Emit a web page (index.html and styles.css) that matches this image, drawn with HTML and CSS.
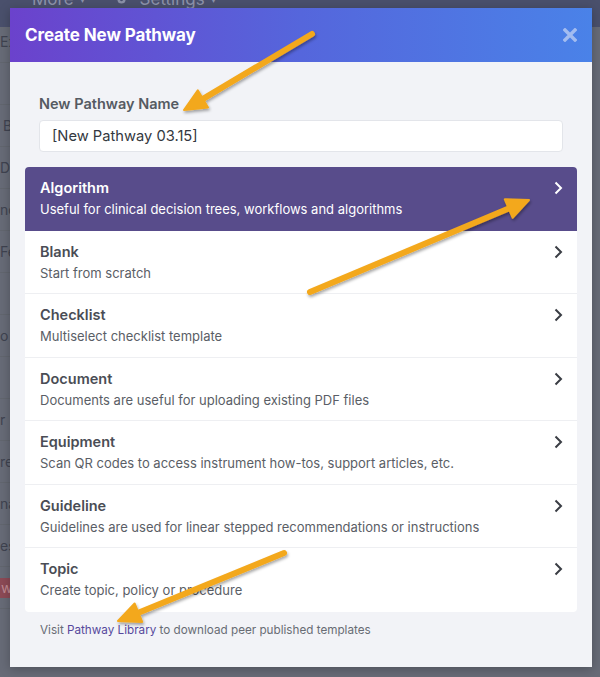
FILE: index.html
```html
<!DOCTYPE html>
<html lang="en">
<head>
<meta charset="utf-8">
<title>Create New Pathway</title>
<link rel="stylesheet" href="styles.css">
</head>
<body>
<div class="page">
  <div class="topnav">
    <span class="nav-item">More <span class="caret">&#9662;</span></span>
    <span class="nav-item"><svg class="gear" viewBox="0 0 16 16" width="13" height="13"><circle cx="8" cy="8" r="5" fill="#8a90a6"/><circle cx="8" cy="8" r="2" fill="#474e6c"/></svg> Settings <span class="caret">&#9662;</span></span>
  </div>
  <ul class="side">
    <li>Ex</li>
    <li></li>
    <li class="ind">B</li>
    <li>Dc</li>
    <li>nc</li>
    <li>Fe</li>
    <li></li>
    <li>o</li>
    <li></li>
    <li>r</li>
    <li>re</li>
    <li>na</li>
    <li>es</li>
    <li><span class="badge">w</span></li>
  </ul>
</div>

<div class="modal">
  <div class="modal-header">
    <h1 class="modal-title">Create New Pathway</h1>
    <span class="close"><svg viewBox="0 0 14 14" width="14" height="14"><path d="M2 2 L12 12 M12 2 L2 12" stroke="currentColor" stroke-width="3.4" stroke-linecap="square"/></svg></span>
  </div>
  <div class="modal-body">
    <div class="field">
      <label class="field-label">New Pathway Name</label>
      <div class="field-input">[New Pathway 03.15]</div>
    </div>
    <ul class="types">
      <li class="type active">
        <div class="type-text"><div class="type-title">Algorithm</div><div class="type-desc">Useful for clinical decision trees, workflows and algorithms</div></div>
        <svg class="chev" viewBox="0 0 9 14" width="9" height="14"><path d="M1.5 1.5 L7 7 L1.5 12.5" fill="none" stroke="currentColor" stroke-width="2"/></svg>
      </li>
      <li class="type">
        <div class="type-text"><div class="type-title">Blank</div><div class="type-desc">Start from scratch</div></div>
        <svg class="chev" viewBox="0 0 9 14" width="9" height="14"><path d="M1.5 1.5 L7 7 L1.5 12.5" fill="none" stroke="currentColor" stroke-width="2"/></svg>
      </li>
      <li class="type">
        <div class="type-text"><div class="type-title">Checklist</div><div class="type-desc">Multiselect checklist template</div></div>
        <svg class="chev" viewBox="0 0 9 14" width="9" height="14"><path d="M1.5 1.5 L7 7 L1.5 12.5" fill="none" stroke="currentColor" stroke-width="2"/></svg>
      </li>
      <li class="type">
        <div class="type-text"><div class="type-title">Document</div><div class="type-desc">Documents are useful for uploading existing PDF files</div></div>
        <svg class="chev" viewBox="0 0 9 14" width="9" height="14"><path d="M1.5 1.5 L7 7 L1.5 12.5" fill="none" stroke="currentColor" stroke-width="2"/></svg>
      </li>
      <li class="type">
        <div class="type-text"><div class="type-title">Equipment</div><div class="type-desc">Scan QR codes to access instrument how-tos, support articles, etc.</div></div>
        <svg class="chev" viewBox="0 0 9 14" width="9" height="14"><path d="M1.5 1.5 L7 7 L1.5 12.5" fill="none" stroke="currentColor" stroke-width="2"/></svg>
      </li>
      <li class="type">
        <div class="type-text"><div class="type-title">Guideline</div><div class="type-desc">Guidelines are used for linear stepped recommendations or instructions</div></div>
        <svg class="chev" viewBox="0 0 9 14" width="9" height="14"><path d="M1.5 1.5 L7 7 L1.5 12.5" fill="none" stroke="currentColor" stroke-width="2"/></svg>
      </li>
      <li class="type">
        <div class="type-text"><div class="type-title">Topic</div><div class="type-desc">Create topic, policy or procedure</div></div>
        <svg class="chev" viewBox="0 0 9 14" width="9" height="14"><path d="M1.5 1.5 L7 7 L1.5 12.5" fill="none" stroke="currentColor" stroke-width="2"/></svg>
      </li>
    </ul>
    <p class="footer">Visit <a class="footer-link" href="#">Pathway Library</a> to download peer published templates</p>
  </div>
</div>

<svg class="arrows" viewBox="0 0 600 677" width="600" height="677">
  <defs>
    <filter id="sh" x="-20%" y="-20%" width="140%" height="140%">
      <feDropShadow dx="1" dy="2" stdDeviation="1.6" flood-color="#000" flood-opacity="0.35"/>
    </filter>
  </defs>
  <g fill="#f3a81c" stroke="#f3a81c" filter="url(#sh)">
    <line x1="312" y1="34" x2="203" y2="98.8" stroke-width="6" stroke-linecap="round"/>
    <polygon points="184,110 197.8,90.2 208,107.4" stroke-width="2" stroke-linejoin="round"/>
    <line x1="310" y1="292" x2="508.7" y2="208.5" stroke-width="6" stroke-linecap="round"/>
    <polygon points="529,200 512.6,217.7 504.8,199.3" stroke-width="2" stroke-linejoin="round"/>
    <line x1="284" y1="553" x2="138.4" y2="612.7" stroke-width="6" stroke-linecap="round"/>
    <polygon points="118,621 134.6,603.5 142.2,621.9" stroke-width="2" stroke-linejoin="round"/>
  </g>
</svg>
</body>
</html>
```

FILE: styles.css
```css
* { box-sizing: border-box; }

html, body {
  margin: 0;
  padding: 0;
}

body {
  width: 600px;
  height: 677px;
  overflow: hidden;
  background: #676b77;
  font-family: Inter, "Noto Sans", sans-serif;
  position: relative;
}

/* background page (dimmed) */
.page {
  height: 677px;
}

.topnav {
  height: 27px;
  background: #4a506c;
  display: flex;
  align-items: flex-start;
  gap: 30px;
  padding-left: 32px;
  overflow: hidden;
}

.nav-item {
  margin-top: -9px;
  font-size: 17px;
  line-height: 16px;
  color: #8d93aa;
  display: flex;
  align-items: center;
  gap: 6px;
}

.caret {
  font-size: 10px;
}

.gear {
  margin-right: 6px;
}

.side {
  list-style: none;
  margin: 0;
  padding: 0;
  width: 10px;
  overflow: hidden;
}

.side li {
  height: 42px;
  line-height: 42px;
  font-size: 14px;
  color: #3f4350;
  white-space: nowrap;
  border-bottom: 1px solid #62666f;
  margin-top: -6px;
  margin-bottom: 6px;
}

.side li.ind {
  padding-left: 3px;
}

.badge {
  display: inline-block;
  background: #8c4a56;
  color: #c08a92;
  padding: 0 1px;
  line-height: 20px;
}

/* modal */
.modal {
  position: absolute;
  left: 10px;
  top: 8px;
  width: 582px;
  height: 659px;
  background: #f2f3f7;
  box-shadow: 0 2px 10px rgba(0, 0, 0, 0.25);
}

.modal-header {
  height: 54px;
  display: flex;
  align-items: center;
  justify-content: space-between;
  padding: 0 15px 0 15px;
  background: linear-gradient(90deg, #6b42cc 0%, #5566dc 50%, #4a82e8 100%);
}

.modal-title {
  margin: 0;
  font-size: 17px;
  font-weight: 700;
  color: #ffffff;
  letter-spacing: -0.1px;
}

.close {
  color: #a3bcf0;
  display: flex;
}

.modal-body {
  padding: 32px 15px 0 15px;
}

.field {
  padding: 0 14px;
}

.field-label {
  display: block;
  font-size: 14.5px;
  line-height: 20px;
  font-weight: 600;
  color: #555a62;
  margin-bottom: 6px;
}

.field-input {
  height: 32px;
  border: 1px solid #e3e5ea;
  border-radius: 4px;
  background: #ffffff;
  padding: 0 12px;
  font-size: 14.7px;
  line-height: 30px;
  color: #333840;
}

.types {
  list-style: none;
  margin: 15px 0 0 0;
  padding: 0;
  background: #ffffff;
  border-radius: 4px;
  overflow: hidden;
}

.type {
  display: flex;
  justify-content: space-between;
  align-items: flex-start;
  padding: 11px 14px 9.5px 15px;
  border-bottom: 1px solid #eeeff2;
}

.type:last-child {
  border-bottom: none;
  padding-bottom: 10.5px;
}

.type-title {
  font-size: 14.5px;
  line-height: 20px;
  font-weight: 600;
  color: #4a4d55;
}

.type-desc {
  font-size: 13px;
  line-height: 22px;
  color: #5a5e66;
}

.chev {
  margin-top: 3px;
  color: #3a3d44;
}

.type.active {
  background: #584c8b;
  border-bottom-color: #584c8b;
}

.type.active .type-title,
.type.active .type-desc,
.type.active .chev {
  color: #ffffff;
}

.footer {
  margin: 9px 15px 0 15px;
  font-size: 11.7px;
  line-height: 18px;
  color: #686c74;
}

.footer-link {
  color: #56489c;
  text-decoration: none;
}

.arrows {
  position: absolute;
  left: 0;
  top: 0;
  pointer-events: none;
}
```
